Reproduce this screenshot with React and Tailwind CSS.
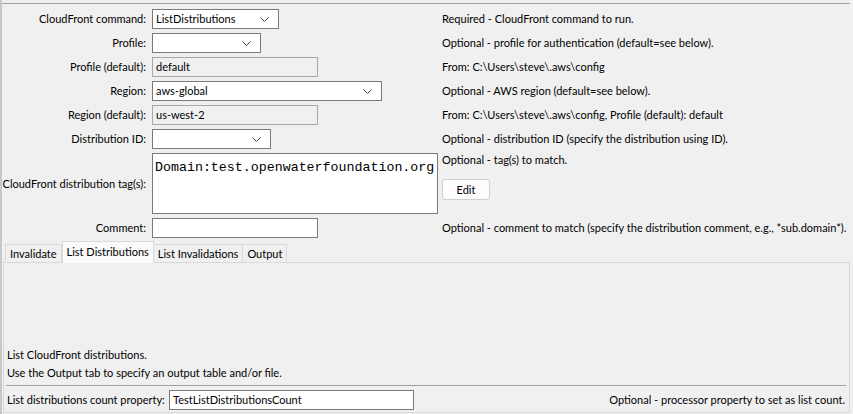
import React from 'react'

function Chevron() {
  return (
    <svg width="9" height="5" viewBox="0 0 9 5" className="shrink-0">
      <polyline points="0.5,0.5 4.5,4.5 8.5,0.5" fill="none" stroke="#404040" strokeWidth="1" />
    </svg>
  )
}

function Select({ value, width }) {
  return (
    <div className={"h-[20px] bg-white border border-[#7a7a7a] flex items-center pl-[3px] pr-[9px] " + width}>
      <span className="flex-1 truncate">{value}</span>
      <Chevron />
    </div>
  )
}

function Field({ value, width, readOnly }) {
  return (
    <div className={"h-[20px] border flex items-center pl-[3px] shrink-0 " + width + (readOnly ? ' bg-[#f0f0f0] border-[#a8a8a8]' : ' bg-white border-[#7a7a7a]')}>
      {value}
    </div>
  )
}

function Row({ label, children, desc }) {
  return (
    <div className="flex items-center">
      <div className="w-[145px] text-right pr-[1px] shrink-0">{label}</div>
      <div className="w-[285px] ml-[5px] shrink-0 flex">{children}</div>
      <div className="ml-[5px]">{desc}</div>
    </div>
  )
}

export default function App() {
  return (
    <div className="w-[853px] h-[414px] bg-[#f0f0f0] text-black text-[11px] leading-[16px] whitespace-nowrap font-['Segoe_UI','Lato',sans-serif] overflow-hidden border-l-2 border-[#c8c8c8] flex flex-col">
      <div className="h-[3px]" />
      <div className="mr-[3px] border-t border-[#a0a0a0]" />
      <div className="flex flex-col gap-[4px] pt-[5px]">
        <Row label="CloudFront command:" desc="Required - CloudFront command to run.">
          <Select value="ListDistributions" width="w-[127px]" />
        </Row>
        <Row label="Profile:" desc="Optional - profile for authentication (default=see below).">
          <Select value="" width="w-[109px]" />
        </Row>
        <Row label="Profile (default):" desc="From: C:\Users\steve\.aws\config">
          <Field value="default" width="w-[166px]" readOnly />
        </Row>
        <Row label="Region:" desc="Optional - AWS region (default=see below).">
          <Select value="aws-global" width="w-[230px]" />
        </Row>
        <Row label="Region (default):" desc="From: C:\Users\steve\.aws\config, Profile (default): default">
          <Field value="us-west-2" width="w-[166px]" readOnly />
        </Row>
        <Row label="Distribution ID:" desc="Optional - distribution ID (specify the distribution using ID).">
          <Select value="" width="w-[119px]" />
        </Row>
        <div className="flex">
          <div className="w-[145px] text-right pr-[1px] shrink-0 self-center">CloudFront distribution tag(s):</div>
          <div className="w-[286px] h-[61px] ml-[5px] shrink-0 bg-white border border-[#7a7a7a] pl-[2px] pt-[6px] font-['Liberation_Mono',monospace] text-[13.3px] leading-[16px]">
            Domain:test.openwaterfoundation.org
          </div>
          <div className="ml-[4px] flex flex-col items-start">
            <div className="-mt-[1px]">Optional - tag(s) to match.</div>
            <button className="mt-[11px] w-[48px] h-[21px] bg-[#fdfdfd] border border-[#d0d0d0] rounded-[3px]">Edit</button>
          </div>
        </div>
        <Row label="Comment:" desc="Optional - comment to match (specify the distribution comment, e.g., *sub.domain*).">
          <Field value="" width="w-[166px]" />
        </Row>
      </div>

      <div className="mt-[2px] ml-[1px] mr-[3px] flex-1 flex flex-col mb-[1px]">
        <div className="flex items-end h-[22px] relative z-10 pl-[2px]">
          <div className="h-[18px] px-[4px] border border-b-0 border-[#d9d9d9] bg-[#f0f0f0] flex items-center">Invalidate</div>
          <div className="h-[22px] -mb-[1px] px-[4px] border border-b-0 border-[#d9d9d9] bg-[#fafafa] flex items-start pt-[2px]">List Distributions</div>
          <div className="h-[18px] px-[4px] border border-b-0 border-l-0 border-[#d9d9d9] bg-[#f0f0f0] flex items-center">List Invalidations</div>
          <div className="h-[18px] px-[4px] border border-b-0 border-l-0 border-[#d9d9d9] bg-[#f0f0f0] flex items-center">Output</div>
        </div>
        <div className="flex-1 border border-[#d9d9d9] bg-[#f0f0f0] flex flex-col px-[2px]">
          <div className="flex-1" />
          <div className="h-[18px] flex items-center px-[1px]">List CloudFront distributions.</div>
          <div className="h-[18px] flex items-center px-[1px]">Use the Output tab to specify an output table and/or file.</div>
          <div className="border-t border-[#a0a0a0] mt-[3px] mr-[1px]" />
          <div className="flex items-center mt-[4px] mb-[2px] px-[1px]">
            <div className="w-[162px] shrink-0">List distributions count property:</div>
            <Field value="TestListDistributionsCount" width="w-[245px]" />
            <div className="flex-1 text-right pr-[1px]">Optional - processor property to set as list count.</div>
          </div>
        </div>
      </div>
    </div>
  )
}
